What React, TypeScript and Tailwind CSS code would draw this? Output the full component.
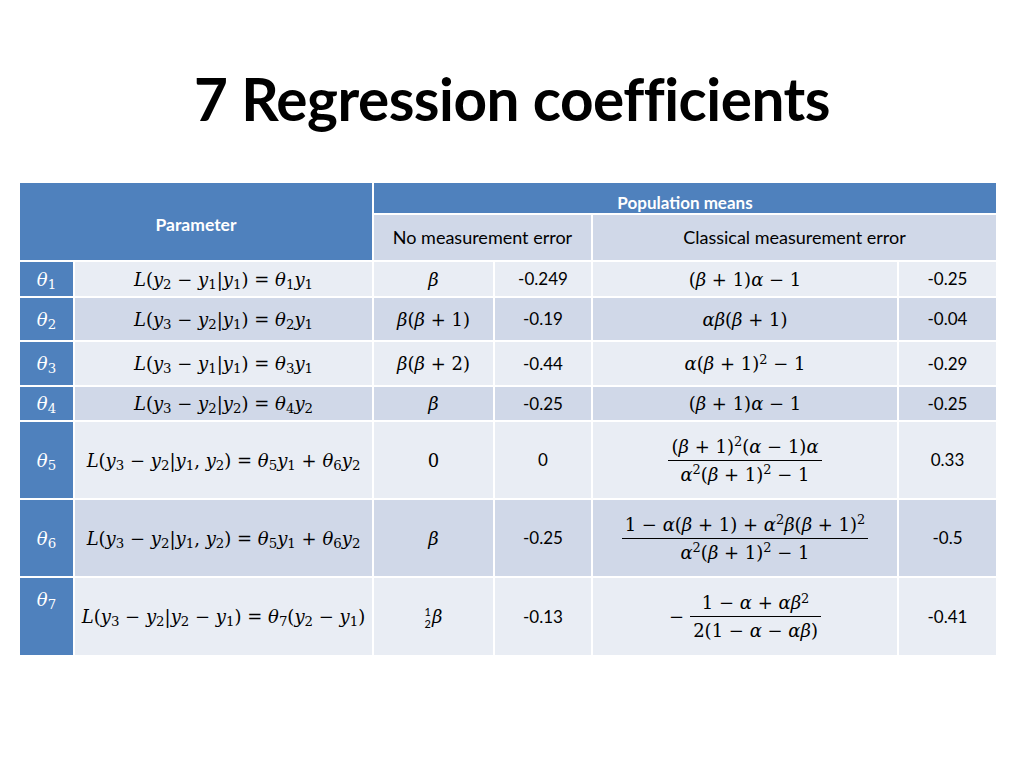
import React from "react";

const sans = { fontFamily: '"Lato", "Open Sans", sans-serif' };

function V({ children }: { children: React.ReactNode }) {
  return <i>{children}</i>;
}

function S({ children }: { children: React.ReactNode }) {
  return <sub className="not-italic text-[0.74em]">{children}</sub>;
}

function Sup({ children }: { children: React.ReactNode }) {
  return <sup className="not-italic text-[0.72em]">{children}</sup>;
}

function Frac({ top, bottom }: { top: React.ReactNode; bottom: React.ReactNode }) {
  return (
    <span className="inline-flex flex-col items-center align-middle">
      <span className="px-[3px] leading-[27px]">{top}</span>
      <span className="w-full border-t border-black" />
      <span className="px-[3px] leading-[27px]">{bottom}</span>
    </span>
  );
}

const y = (n: string) => (
  <>
    <V>y</V>
    <S>{n}</S>
  </>
);
const th = (n: string) => (
  <>
    <V>θ</V>
    <S>{n}</S>
  </>
);
const a = <V>α</V>;
const b = <V>β</V>;
const M = " − ";
const P = " + ";

type Row = {
  n: string;
  def: React.ReactNode;
  exact: React.ReactNode;
  v1: string;
  cme: React.ReactNode;
  v2: string;
  dark: boolean;
  top?: boolean;
};

const rows: Row[] = [
  {
    n: "1",
    def: (
      <>
        <V>L</V>({y("2")}{M}{y("1")}|{y("1")}) = {th("1")}{y("1")}
      </>
    ),
    exact: b,
    v1: "-0.249",
    cme: (
      <>
        ({b}{P}1){a}{M}1
      </>
    ),
    v2: "-0.25",
    dark: false,
  },
  {
    n: "2",
    def: (
      <>
        <V>L</V>({y("3")}{M}{y("2")}|{y("1")}) = {th("2")}{y("1")}
      </>
    ),
    exact: (
      <>
        {b}({b}{P}1)
      </>
    ),
    v1: "-0.19",
    cme: (
      <>
        {a}{b}({b}{P}1)
      </>
    ),
    v2: "-0.04",
    dark: true,
  },
  {
    n: "3",
    def: (
      <>
        <V>L</V>({y("3")}{M}{y("1")}|{y("1")}) = {th("3")}{y("1")}
      </>
    ),
    exact: (
      <>
        {b}({b}{P}2)
      </>
    ),
    v1: "-0.44",
    cme: (
      <>
        {a}({b}{P}1)<Sup>2</Sup>{M}1
      </>
    ),
    v2: "-0.29",
    dark: false,
  },
  {
    n: "4",
    def: (
      <>
        <V>L</V>({y("3")}{M}{y("2")}|{y("2")}) = {th("4")}{y("2")}
      </>
    ),
    exact: b,
    v1: "-0.25",
    cme: (
      <>
        ({b}{P}1){a}{M}1
      </>
    ),
    v2: "-0.25",
    dark: true,
  },
  {
    n: "5",
    def: (
      <>
        <V>L</V>({y("3")}{M}{y("2")}|{y("1")}, {y("2")}) = {th("5")}{y("1")}{P}{th("6")}{y("2")}
      </>
    ),
    exact: "0",
    v1: "0",
    cme: (
      <Frac
        top={
          <>
            ({b}{P}1)<Sup>2</Sup>({a}{M}1){a}
          </>
        }
        bottom={
          <>
            {a}<Sup>2</Sup>({b}{P}1)<Sup>2</Sup>{M}1
          </>
        }
      />
    ),
    v2: "0.33",
    dark: false,
  },
  {
    n: "6",
    def: (
      <>
        <V>L</V>({y("3")}{M}{y("2")}|{y("1")}, {y("2")}) = {th("5")}{y("1")}{P}{th("6")}{y("2")}
      </>
    ),
    exact: b,
    v1: "-0.25",
    cme: (
      <Frac
        top={
          <>
            1{M}{a}({b}{P}1){P}{a}<Sup>2</Sup>{b}({b}{P}1)<Sup>2</Sup>
          </>
        }
        bottom={
          <>
            {a}<Sup>2</Sup>({b}{P}1)<Sup>2</Sup>{M}1
          </>
        }
      />
    ),
    v2: "-0.5",
    dark: true,
  },
  {
    n: "7",
    def: (
      <>
        <V>L</V>({y("3")}{M}{y("2")}|{y("2")}{M}{y("1")}) = {th("7")}({y("2")}{M}{y("1")})
      </>
    ),
    exact: (
      <>
        <span className="inline-flex flex-col items-center align-middle text-[11px] leading-[12px] not-italic mr-[1px]" style={sans}>
          <span>1</span>
          <span>2</span>
        </span>
        {b}
      </>
    ),
    v1: "-0.13",
    cme: (
      <span className="inline-flex items-center">
        <span className="mr-[6px]">−</span>
        <Frac
          top={
            <>
              1{M}{a}{P}{a}{b}<Sup>2</Sup>
            </>
          }
          bottom={
            <>
              2(1{M}{a}{M}{a}{b})
            </>
          }
        />
      </span>
    ),
    v2: "-0.41",
    dark: false,
    top: true,
  },
];

const math = "font-['DejaVu_Serif',serif] text-[18px] text-black whitespace-nowrap";

export default function App() {
  return (
    <div className="w-[1024px] h-[768px] bg-white relative overflow-hidden">
      <h1
        className="text-center text-[58.5px] font-bold text-black pt-[58px] leading-[80px] tracking-[-0.5px]"
        style={sans}
      >
        7 Regression coefficients
      </h1>

      <div className="ml-[20px] mt-[45px] w-[976px] grid grid-cols-[53px_297px_119px_96px_304px_97px] grid-rows-[30px_45px_34px_42px_43px_33px_76px_76px_77px] gap-[2px] text-black">
        <div
          className="col-span-2 row-span-2 bg-[#4f81bd] text-white font-bold text-[17.5px] flex items-center justify-center pt-[8px]"
          style={sans}
        >
          Parameter
        </div>
        <div
          className="col-span-4 bg-[#4f81bd] text-white font-bold text-[17px] flex items-center justify-center pt-[10px]"
          style={sans}
        >
          Population means
        </div>
        <div className="col-span-2 bg-[#d0d8e8] flex items-center justify-center text-[18px]" style={sans}>
          No measurement error
        </div>
        <div className="col-span-2 bg-[#d0d8e8] flex items-center justify-center text-[18px]" style={sans}>
          Classical measurement error
        </div>

        {rows.map((r) => {
          const bg = r.dark ? "bg-[#d0d8e8]" : "bg-[#e9edf4]";
          return (
            <React.Fragment key={r.n}>
              <div
                className={`bg-[#4f81bd] text-white flex justify-center font-['DejaVu_Serif',serif] text-[18px] ${
                  r.top ? "items-start pt-[8px]" : "items-center"
                }`}
              >
                <span>
                  <i>θ</i>
                  <sub className="text-[0.74em]">{r.n}</sub>
                </span>
              </div>
              <div className={`${bg} ${math} flex items-center justify-center`}>
                <span>{r.def}</span>
              </div>
              <div className={`${bg} ${math} flex items-center justify-center`}>
                <span>{r.exact}</span>
              </div>
              <div className={`${bg} flex items-center justify-center text-[17px]`} style={sans}>
                {r.v1}
              </div>
              <div className={`${bg} ${math} flex items-center justify-center`}>
                <span>{r.cme}</span>
              </div>
              <div className={`${bg} flex items-center justify-center text-[17px]`} style={sans}>
                {r.v2}
              </div>
            </React.Fragment>
          );
        })}
      </div>
    </div>
  );
}
